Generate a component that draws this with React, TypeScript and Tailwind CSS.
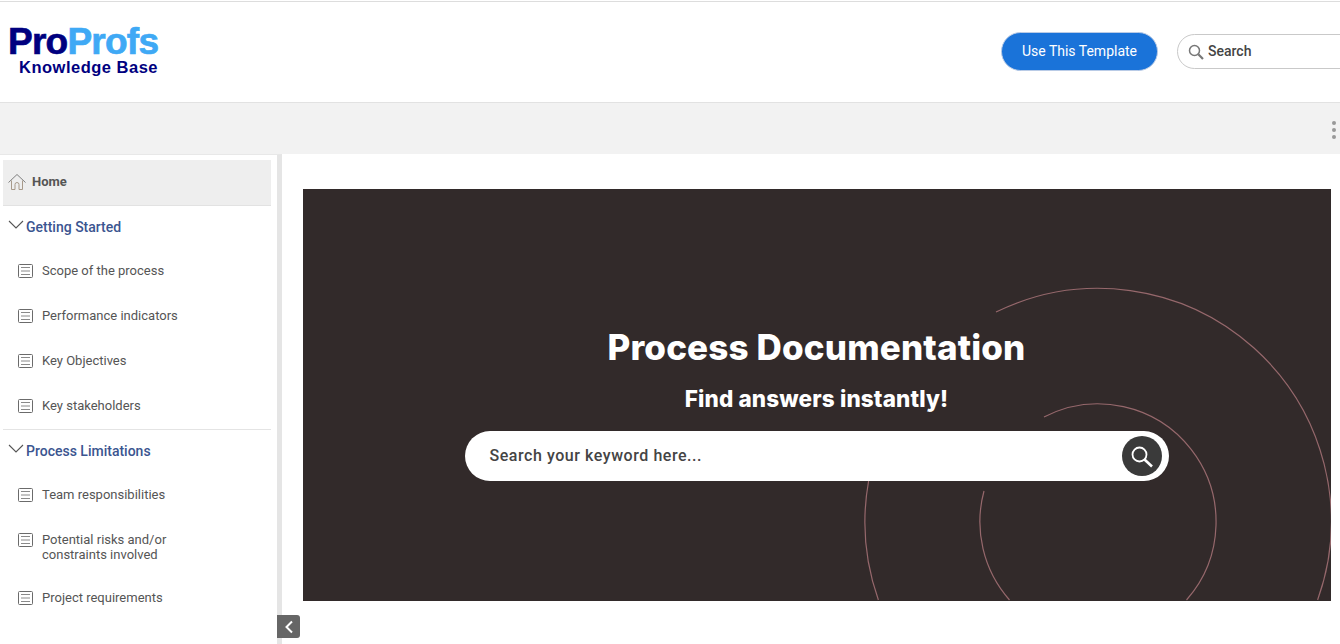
import React from "react";

const ROBOTO = "font-['Roboto',sans-serif]";

function DocIcon() {
  return (
    <svg width="16" height="16" viewBox="0 0 16 16" fill="none" className="shrink-0" stroke="#6b6b6b">
      <rect x="0.5" y="1.5" width="14" height="13" rx="1" />
      <path d="M3 4.5h9M3 8h9M3 11.5h9" stroke="#8a8a8a" />
    </svg>
  );
}

function Chevron() {
  return (
    <svg width="16" height="9" viewBox="0 0 16 9" fill="none" stroke="#555" strokeWidth="1.1" className="shrink-0">
      <path d="M1 1l7 7 7-7" />
    </svg>
  );
}

function Page({ label, h = "h-[45px]", leading = "leading-[16px]" }: { label: React.ReactNode; h?: string; leading?: string }) {
  return (
    <div className={`flex items-start gap-[8px] pl-[15px] ${h}`}>
      <DocIcon />
      <span className={`text-[13px] text-[#555555] ${leading}`}>{label}</span>
    </div>
  );
}

function Group({ title }: { title: string }) {
  return (
    <div className="flex items-center h-[42px] pl-[5px] gap-[2px]">
      <div className="-mt-[5px] flex"><Chevron /></div>
      <span className="text-[14px] font-medium text-[#3b5590]">{title}</span>
    </div>
  );
}

export default function App() {
  return (
    <div className={`w-[1340px] h-[644px] overflow-hidden bg-white flex flex-col relative ${ROBOTO}`}>
      <header className="h-[102px] shrink-0 mt-[1px] border-t border-b border-t-[#dddddd] border-b-[#e2e2e2] flex items-center pl-[8px]">
        <div className="flex flex-col w-[152px] -mt-[3px]">
          <div className="font-['Liberation_Sans',sans-serif] font-bold text-[37px] leading-[33px] tracking-[-0.75px] whitespace-nowrap [-webkit-text-stroke:0.7px_currentColor]">
            <span className="text-[#00007f]">Pro</span>
            <span className="text-[#3fa9f5]">Profs</span>
          </div>
          <div className="font-['Liberation_Sans',sans-serif] font-bold text-[16.5px] leading-[18px] tracking-[0.5px] text-[#00007f] pl-[11px] whitespace-nowrap">
            Knowledge Base
          </div>
        </div>
        <div className="ml-auto flex items-center shrink-0 -mr-[60px] -mt-[1px]">
          <button className="w-[157px] h-[39px] rounded-full bg-[#1a73d9] border border-[#b9cbe6] text-white text-[14px]">
            Use This Template
          </button>
          <div className="ml-[19px] w-[223px] h-[35px] rounded-full border border-[#c9c9c9] flex items-center pl-[10px] gap-[4px]">
            <svg width="16" height="16" viewBox="0 0 16 16" fill="none" stroke="#777" className="shrink-0">
              <circle cx="6.5" cy="6.5" r="5" strokeWidth="1.5" />
              <path d="M10.3 10.3L15 15" strokeWidth="2.2" />
            </svg>
            <span className="text-[14px] font-medium text-[#444444]">Search</span>
          </div>
        </div>
      </header>

      <div className="h-[51px] shrink-0 bg-[#f2f2f2] flex items-center justify-end pr-[4px]">
        <div className="flex flex-col gap-[3px] mt-[2px]">
          <span className="block w-[4px] h-[4px] rounded-full bg-[#999999]" />
          <span className="block w-[4px] h-[4px] rounded-full bg-[#999999]" />
          <span className="block w-[4px] h-[4px] rounded-full bg-[#999999]" />
        </div>
      </div>

      <div className="flex flex-1 min-h-0">
        <aside className="w-[282px] shrink-0 border-r-[5px] border-r-[#e5e5e5] border-t border-t-[#e8e8e8] pl-[3px] pr-[5px] pt-[5px]">
          <div className="w-[268px]">
            <div className="h-[46px] bg-[#eeeeee] border-b border-[#e2e2e2] flex items-center pl-[5px] gap-[6px] pb-[2px]">
              <svg width="18" height="18" viewBox="0 0 18 18" fill="none" stroke="#808080" className="shrink-0">
                <path d="M0.5 9.5L9 1.5 17.5 9.5" />
                <path d="M3.5 7.5V16.5H7V11.5a2 2 0 014 0V16.5h3.5V7.5" stroke="#a89a8a" />
              </svg>
              <span className="text-[13px] font-bold text-[#555555]">Home</span>
            </div>
            <div className="border-b border-[#e4e4e4]">
              <Group title="Getting Started" />
              <div className="pt-[15px]">
                <Page label="Scope of the process" />
                <Page label="Performance indicators" />
                <Page label="Key Objectives" />
                <Page label="Key stakeholders" h="h-[31px]" />
              </div>
            </div>
            <Group title="Process Limitations" />
            <div className="pt-[15px]">
              <Page label="Team responsibilities" />
              <Page label={<>Potential risks and/or<br />constraints involved</>} h="h-[58px]" leading="leading-[15px]" />
              <Page label="Project requirements" />
            </div>
          </div>
        </aside>

        <main className="flex-1 pl-[21px] pr-[9px] pt-[35px]">
          <section className="h-[412px] bg-[#322a2a] relative overflow-hidden flex flex-col items-center pt-[135px]">
            <svg width="1028" height="412" viewBox="0 0 1028 412" fill="none" stroke="#96686c" strokeWidth="1.2" className="absolute left-0 top-0">
              <path d="M693 123A233 233 0 0 1 1014.6 411" />
              <path d="M575.4 411A233 233 0 0 1 565.6 292" />
              <path d="M741 228A118 118 0 0 1 883.5 411" />
              <path d="M706.5 411A118 118 0 0 1 681 302" />
            </svg>
            <h1 className="relative font-['Inter',sans-serif] font-extrabold text-[35px] leading-[46px] tracking-[0.15px] text-white -ml-[1px]">
              Process Documentation
            </h1>
            <h2 className="relative font-['Inter',sans-serif] font-extrabold text-[22.5px] leading-[30px] tracking-[0.13px] text-white mt-[14px] -ml-[1px]">
              Find answers instantly!
            </h2>
            <div className="relative w-[704px] h-[50px] rounded-full bg-white mt-[17px] -ml-[1px] flex items-center pl-[25px] pr-[7px] justify-between">
              <span className="text-[16px] font-medium tracking-[0.55px] text-[#444444]">Search your keyword here...</span>
              <div className="w-[40px] h-[40px] rounded-full bg-[#3a3a3a] flex items-center justify-center">
                <svg width="24" height="24" viewBox="0 0 24 24" fill="none" stroke="#ffffff">
                  <circle cx="9.5" cy="10.5" r="7" strokeWidth="1.8" />
                  <path d="M14.5 15.5L22 22.5" strokeWidth="2.6" />
                </svg>
              </div>
            </div>
          </section>
        </main>
      </div>

      <div className="absolute left-[277px] top-[615px] w-[23px] h-[23px] rounded-r-[3px] bg-[#666666] flex items-center justify-center">
        <svg width="10" height="14" viewBox="0 0 10 14" fill="none" stroke="#ffffff" strokeWidth="2">
          <path d="M8 1.5L2.5 7 8 12.5" />
        </svg>
      </div>
    </div>
  );
}
